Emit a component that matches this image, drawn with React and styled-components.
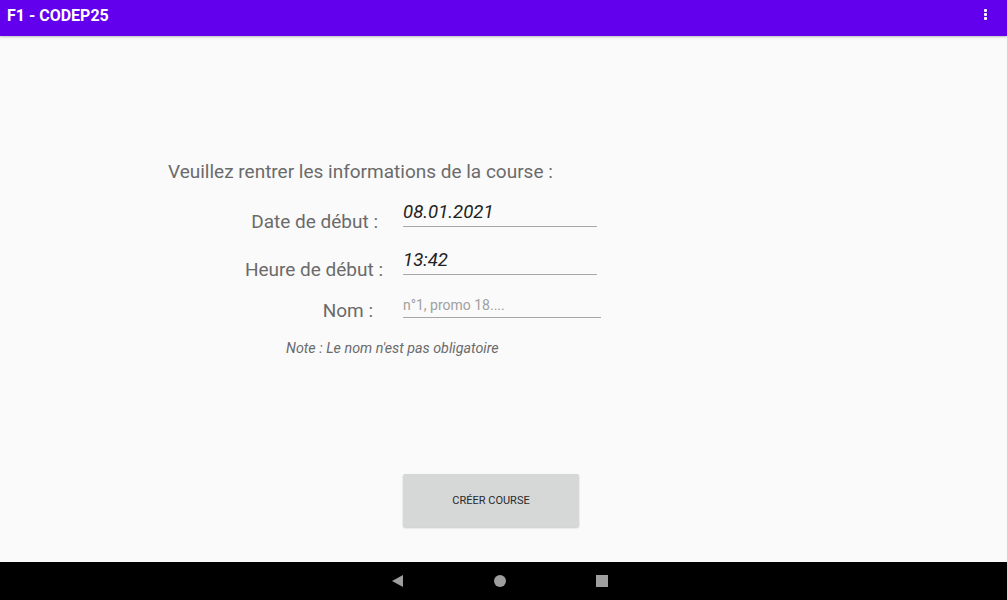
import React from 'react'
import styled, { createGlobalStyle } from 'styled-components'

const Global = createGlobalStyle`
    html, body {
        margin: 0;
        padding: 0;
        background: #fafafa;
        font-family: Roboto, "Noto Sans", sans-serif;
    }
`

const App = () => {
    return (
        <Page>
            <Global />
            <AppBar>
                <BarTitle>F1 - CODEP25</BarTitle>
                <Overflow>
                    <Dot />
                    <Dot />
                    <Dot />
                </Overflow>
            </AppBar>
            <Main>
                <Intro>Veuillez rentrer les informations de la course :</Intro>
                <Row>
                    <Label $right={25} $top={9}>Date de début :</Label>
                    <Field $width={194}>08.01.2021</Field>
                </Row>
                <Row $gap={18}>
                    <Label $right={20} $top={9}>Heure de début :</Label>
                    <Field $width={194}>13:42</Field>
                </Row>
                <Row $gap={16}>
                    <Label $right={30} $top={4}>Nom :</Label>
                    <Field $width={198} $hint>n°1, promo 18....</Field>
                </Row>
                <Note>Note : Le nom n'est pas obligatoire</Note>
                <Button>CRÉER COURSE</Button>
            </Main>
            <NavBar>
                <svg width="14" height="14" viewBox="0 0 14 14">
                    <polygon points="12,1 12,13 1,7" fill="#9e9e9e" />
                </svg>
                <svg width="14" height="14" viewBox="0 0 14 14">
                    <circle cx="7" cy="7" r="6" fill="#9e9e9e" />
                </svg>
                <svg width="14" height="14" viewBox="0 0 14 14">
                    <rect x="1" y="1" width="12" height="12" fill="#9e9e9e" />
                </svg>
            </NavBar>
        </Page>
    )
}

export default App

const Page = styled.div`
    width: 1007px;
    height: 600px;
    display: flex;
    flex-direction: column;
    overflow: hidden;
`

const AppBar = styled.div`
    height: 36px;
    flex: none;
    background: #6200ee;
    display: flex;
    align-items: center;
    justify-content: space-between;
    padding: 0 20px 0 7px;
    box-shadow: 0 1px 2px rgba(0, 0, 0, 0.25);
    position: relative;
    z-index: 1;
`

const BarTitle = styled.div`
    color: #fff;
    font-size: 16px;
    font-weight: 700;
    margin-top: -6px;
`

const Overflow = styled.div`
    display: flex;
    flex-direction: column;
    gap: 1px;
    margin-top: -8px;
`

const Dot = styled.span`
    width: 3px;
    height: 3px;
    background: #fff;
    border-radius: 1px;
`

const Main = styled.div`
    flex: 1;
    display: flex;
    flex-direction: column;
    align-items: flex-start;
    padding-top: 125px;
`

const Intro = styled.div`
    margin-left: 168px;
    font-size: 19px;
    line-height: 21px;
    color: #6b6b6b;
    margin-bottom: 20px;
`

const Row = styled.div`
    display: flex;
    align-items: flex-start;
    margin-top: ${p => p.$gap || 0}px;
    margin-left: 168px;
`

const Label = styled.div`
    width: 235px;
    box-sizing: border-box;
    text-align: right;
    padding-right: ${p => p.$right}px;
    padding-top: ${p => p.$top}px;
    font-size: 19px;
    line-height: 21px;
    color: #6b6b6b;
`

const Field = styled.div`
    width: ${p => p.$width}px;
    padding: 0 0 ${p => (p.$hint ? 4 : 3)}px 0;
    border-bottom: 1px solid #a8a8a8;
    font-size: ${p => (p.$hint ? 14 : 18.6)}px;
    line-height: ${p => (p.$hint ? 16 : 21)}px;
    font-style: ${p => (p.$hint ? 'normal' : 'italic')};
    color: ${p => (p.$hint ? '#a0a0a0' : '#222')};
    ${p => p.$hint && 'margin-top: 1px;'}
`

const Note = styled.div`
    margin: 19px 0 0 286px;
    font-size: 14.3px;
    line-height: 16px;
    font-style: italic;
    color: #6b6b6b;
`

const Button = styled.div`
    margin: 118px 0 0 403px;
    width: 176px;
    height: 53px;
    background: #d6d7d7;
    border-radius: 2px;
    box-shadow: 0 1px 2px rgba(0, 0, 0, 0.2);
    display: flex;
    align-items: center;
    justify-content: center;
    font-size: 11px;
    font-weight: 400;
    color: #2a2a2a;
`

const NavBar = styled.div`
    height: 38px;
    flex: none;
    background: #000;
    display: flex;
    align-items: center;
    justify-content: center;
    gap: 88px;
    padding-right: 8px;
`
